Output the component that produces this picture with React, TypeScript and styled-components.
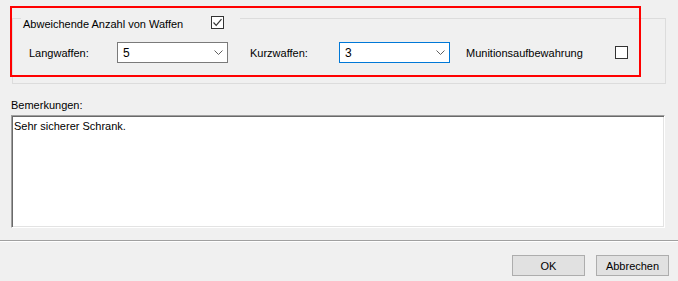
import styled, { createGlobalStyle } from "styled-components";

const GlobalStyle = createGlobalStyle`
  html, body {
    margin: 0;
    padding: 0;
    background: #f0f0f0;
  }
  body {
    font-family: "Liberation Sans", Arial, sans-serif;
    font-size: 11px;
    color: #000;
  }
`;

const Check = () => (
  <svg width="11" height="11" viewBox="0 0 11 11">
    <polyline points="1.5,5.5 4.2,8.3 9.5,2.2" fill="none" stroke="#333" strokeWidth="1.2" />
  </svg>
);

const Chevron = () => (
  <svg width="9" height="5" viewBox="0 0 9 5">
    <polyline points="0.5,0.5 4.5,4.5 8.5,0.5" fill="none" stroke="#606060" strokeWidth="1" />
  </svg>
);

export default function App() {
  return (
    <>
      <GlobalStyle />
      <Window>
        <Body>
          <GroupBox>
            <Legend>
              <LegendText>Abweichende Anzahl von Waffen</LegendText>
              <CheckBox>
                <Check />
              </CheckBox>
            </Legend>
            <Row>
              <FieldLabel width={88}>Langwaffen:</FieldLabel>
              <Combo>
                <span>5</span>
                <Chevron />
              </Combo>
              <FieldLabel width={89} gap={22}>Kurzwaffen:</FieldLabel>
              <Combo focused>
                <span>3</span>
                <Chevron />
              </Combo>
              <FieldLabel width={149} gap={16}>Munitionsaufbewahrung</FieldLabel>
              <CheckBox />
            </Row>
          </GroupBox>

          <NotesLabel>Bemerkungen:</NotesLabel>
          <NotesBox>Sehr sicherer Schrank.</NotesBox>
        </Body>

        <Footer>
          <Button>OK</Button>
          <Button>Abbrechen</Button>
        </Footer>

        {/* red highlight annotation */}
        <Highlight />
      </Window>
    </>
  );
}

const Window = styled.div`
  position: relative;
  width: 678px;
  height: 281px;
  background: #f0f0f0;
  overflow: hidden;
  display: flex;
  flex-direction: column;
`;

const Body = styled.div`
  padding: 18px 12px 0 11px;
  height: 222px;
  box-sizing: border-box;
`;

const GroupBox = styled.div`
  position: relative;
  margin-left: 1px;
  width: 654px;
  height: 66px;
  box-sizing: border-box;
  border: 1px solid #dcdcdc;
  padding: 23px 0 0 16px;
`;

const Legend = styled.div`
  position: absolute;
  top: -3px;
  left: 8px;
  height: 13px;
  display: flex;
  align-items: center;
  gap: 30px;
  padding: 0 16px 0 2px;
  background: #f0f0f0;
`;

const LegendText = styled.span`
  width: 158px;
  white-space: nowrap;
  line-height: 13px;
  margin-top: 3px;
`;

const CheckBox = styled.div`
  width: 13px;
  height: 13px;
  box-sizing: border-box;
  border: 1px solid #333;
  background: #fff;
  display: flex;
  align-items: center;
  justify-content: center;
  flex: none;
`;

const Row = styled.div`
  display: flex;
  align-items: center;
  height: 21px;
`;

const FieldLabel = styled.span<{ width: number; gap?: number }>`
  width: ${({ width }) => width}px;
  margin-left: ${({ gap }) => gap ?? 0}px;
  white-space: nowrap;
  flex: none;
`;

const Combo = styled.div<{ focused?: boolean }>`
  width: 111px;
  height: 21px;
  box-sizing: border-box;
  border: 1px solid ${({ focused }) => (focused ? "#0078d7" : "#7a7a7a")};
  background: #fff;
  display: flex;
  align-items: center;
  justify-content: space-between;
  padding: 0 4px 0 5px;
  font-size: 12px;
  flex: none;
`;

const NotesLabel = styled.div`
  margin-top: 13px;
  height: 16px;
  line-height: 16px;
`;

const NotesBox = styled.div`
  margin-top: 2px;
  width: 654px;
  height: 113px;
  box-sizing: border-box;
  background: #fff;
  border-top: 1px solid #a0a0a0;
  border-left: 1px solid #a0a0a0;
  border-right: 1px solid #ffffff;
  border-bottom: 1px solid #ffffff;
  box-shadow: inset 1px 1px 0 #696969, inset -1px -1px 0 #e3e3e3;
  padding: 3px 2px;
  line-height: 14px;
`;

const Footer = styled.div`
  margin-top: 18px;
  border-top: 1px solid #a0a0a0;
  box-shadow: inset 0 1px 0 #ffffff;
  flex: 1;
  display: flex;
  justify-content: flex-end;
  align-items: flex-start;
  gap: 11px;
  padding: 14px 9px 0 0;
`;

const Button = styled.button`
  width: 73px;
  height: 21px;
  box-sizing: border-box;
  border: 1px solid #adadad;
  background: #e1e1e1;
  font-family: inherit;
  font-size: 11px;
  color: #000;
  padding: 0;
`;

const Highlight = styled.div`
  position: absolute;
  left: 10px;
  top: 6px;
  width: 631px;
  height: 71px;
  box-sizing: border-box;
  border: 2px solid #ff0000;
  pointer-events: none;
`;
